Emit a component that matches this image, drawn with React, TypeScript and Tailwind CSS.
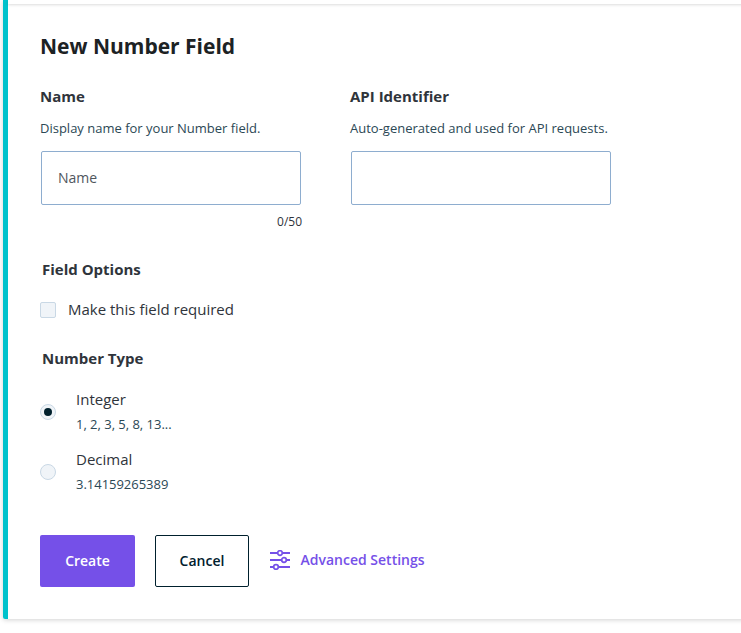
import React from "react";

function Slider() {
  return (
    <svg width="20" height="20" viewBox="0 0 20 20" fill="none" stroke="#7550e8" strokeWidth="2">
      <path d="M0 3H7.5M12.5 3H20M0 10H11.5M16.5 10H20M0 17H3.5M8.5 17H20" />
      <circle cx="10" cy="3" r="2.3" strokeWidth="1.7" />
      <circle cx="14" cy="10" r="2.3" strokeWidth="1.7" />
      <circle cx="6" cy="17" r="2.3" strokeWidth="1.7" />
    </svg>
  );
}

function Field({ label, help, placeholder }: { label: string; help: string; placeholder?: string }) {
  return (
    <div className="w-[262px]">
      <h3 className="text-[15px] font-bold leading-5">{label}</h3>
      <p className="mt-3 whitespace-nowrap text-[13px] leading-5 text-[#2b4855]">{help}</p>
      <div className="ml-px mt-[13px] flex h-[54px] w-[260px] items-center rounded-[2px] border border-[#8eadcf] px-4 text-sm text-[#50565d]">{placeholder}</div>
    </div>
  );
}

function Option({ title, example, checked }: { title: string; example: string; checked?: boolean }) {
  return (
    <div className="flex h-[60px] items-center">
      <span className="flex size-4 items-center justify-center rounded-full border border-[#c9d8e5] bg-[#f0f4f8]">
        {checked && <span className="size-2 rounded-full bg-[#00202d]" />}
      </span>
      <div className="-mt-px ml-5">
        <div className="text-[15px] leading-6">{title}</div>
        <div className="mt-px text-[13px] leading-6 tracking-[-0.02px] text-[#2b4855]">{example}</div>
      </div>
    </div>
  );
}

export default function App() {
  return (
    <div className="h-[633px] w-[741px] overflow-hidden bg-white pl-[3px] font-['Open_Sans',sans-serif] text-[#2f343b]">
      <div className="h-[619px] w-[760px] rounded-bl-[2px] border-l-[5px] border-l-[#00c2cc] pl-8 shadow-[0_1px_5px_rgba(0,0,0,0.18)]">
        <div className="-ml-8 h-1 shadow-[0_1px_3px_rgba(0,0,0,0.14)]" />
        <h2 className="pt-[27px] text-[21px] font-bold leading-[30px] text-[#1c2224]">New Number Field</h2>
        <div className="mt-[25px] flex gap-12">
          <Field label="Name" help="Display name for your Number field." placeholder="Name" />
          <Field label="API Identifier" help="Auto-generated and used for API requests." />
        </div>
        <div className="mt-2 w-[262px] text-right text-xs leading-[18px]">0/50</div>
        <h3 className="ml-0.5 mt-7 text-[15px] font-bold leading-5">Field Options</h3>
        <div className="mt-[21px] flex h-5 items-center gap-3 text-[15px]">
          <span className="size-4 rounded-[2px] border border-[#c9d8e5] bg-[#f0f4f8]" />
          <span className="-mt-0.5">Make this field required</span>
        </div>
        <h3 className="ml-0.5 mt-7 text-[15px] font-bold leading-5">Number Type</h3>
        <div className="mt-[14px]">
          <Option title="Integer" example="1, 2, 3, 5, 8, 13..." checked />
          <Option title="Decimal" example="3.14159265389" />
        </div>
        <div className="mt-[33px] flex items-center text-sm font-semibold">
          <button className="h-[52px] w-[95px] rounded-[2px] bg-[#7550e8] text-white">Create</button>
          <button className="ml-5 h-[52px] w-[94px] rounded-[2px] border border-[#00202d] text-[#00202d]">Cancel</button>
          <button className="-mt-0.5 ml-[21px] flex items-center gap-[10.5px] text-[#7550e8]"><Slider />Advanced Settings</button>
        </div>
      </div>
    </div>
  );
}
